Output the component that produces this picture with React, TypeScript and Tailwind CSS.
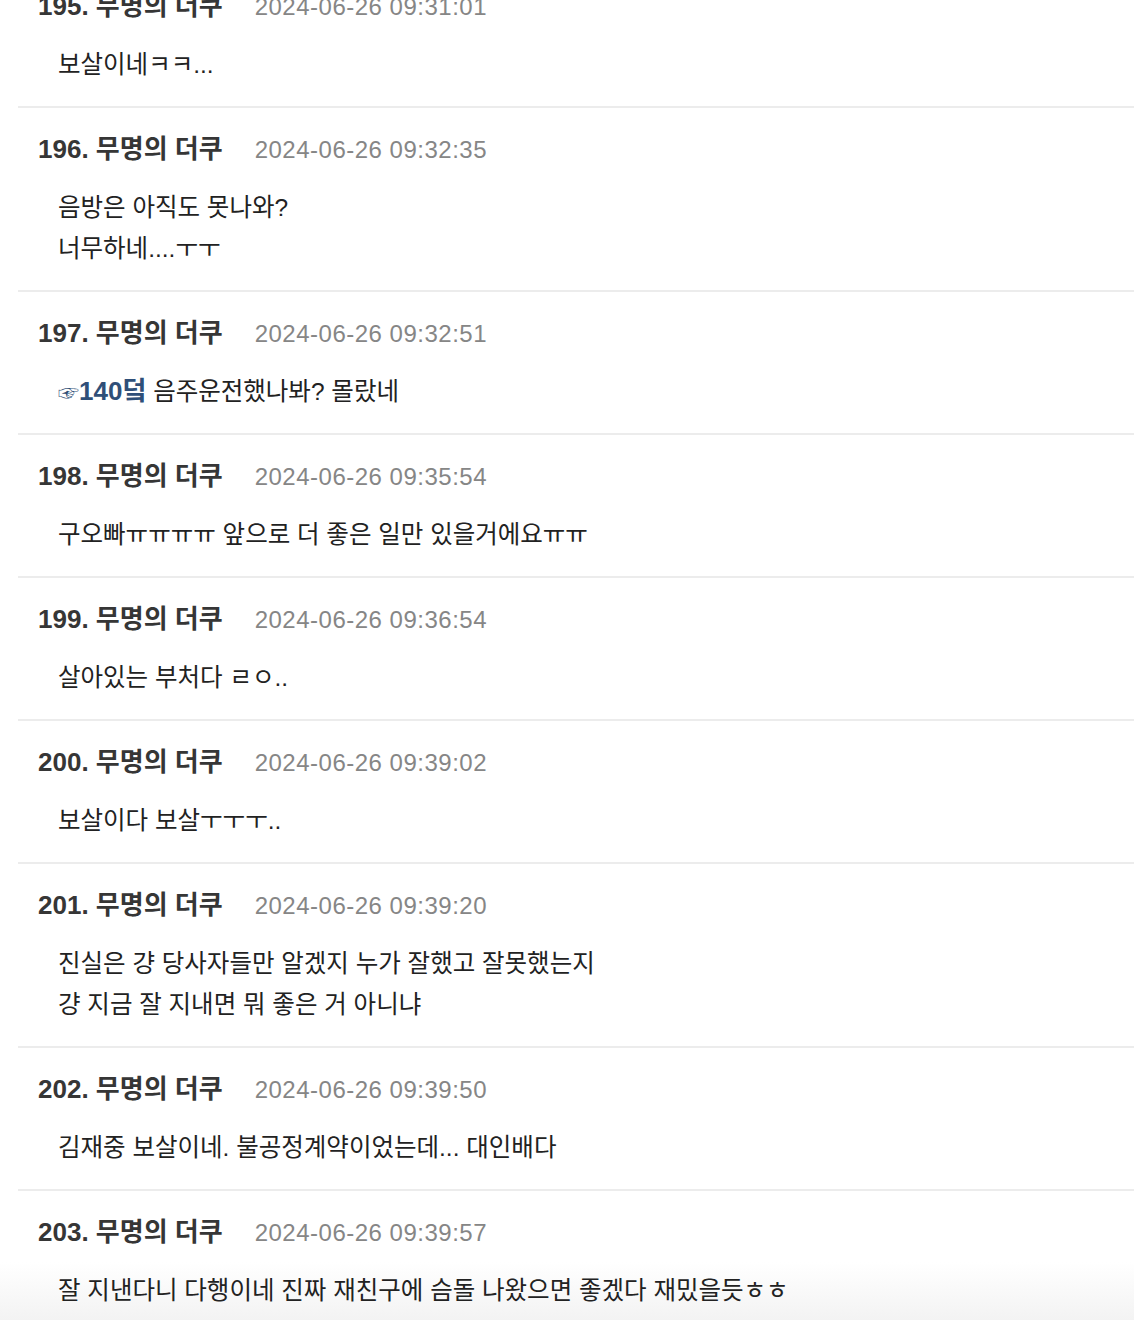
import React from 'react';

type Comment = {
  no: number;
  time: string;
  lines: React.ReactNode[];
};

const comments: Comment[] = [
  { no: 195, time: '2024-06-26 09:31:01', lines: ['보살이네ㅋㅋ...'] },
  { no: 196, time: '2024-06-26 09:32:35', lines: ['음방은 아직도 못나와?', '너무하네....ㅜㅜ'] },
  {
    no: 197,
    time: '2024-06-26 09:32:51',
    lines: [
      <>
        <span className="leading-none text-[#2f4f78]">
          <span className="text-[21px] leading-none">☞</span>
          <span className="text-[26px] font-bold leading-none">140덬</span>
        </span>{' '}
        음주운전했나봐? 몰랐네
      </>,
    ],
  },
  { no: 198, time: '2024-06-26 09:35:54', lines: ['구오빠ㅠㅠㅠㅠ 앞으로 더 좋은 일만 있을거에요ㅠㅠ'] },
  { no: 199, time: '2024-06-26 09:36:54', lines: ['살아있는 부처다 ㄹㅇ..'] },
  { no: 200, time: '2024-06-26 09:39:02', lines: ['보살이다 보살ㅜㅜㅜ..'] },
  {
    no: 201,
    time: '2024-06-26 09:39:20',
    lines: ['진실은 걍 당사자들만 알겠지 누가 잘했고 잘못했는지', '걍 지금 잘 지내면 뭐 좋은 거 아니냐'],
  },
  { no: 202, time: '2024-06-26 09:39:50', lines: ['김재중 보살이네. 불공정계약이었는데... 대인배다'] },
  { no: 203, time: '2024-06-26 09:39:57', lines: ['잘 지낸다니 다행이네 진짜 재친구에 슴돌 나왔으면 좋겠다 재밌을듯ㅎㅎ'] },
];

function CommentItem({ comment }: { comment: Comment }) {
  return (
    <div className="border-b-2 border-[#ececec] pl-5 pt-[22px] pb-[21px]">
      <div className="flex items-baseline h-[38px]">
        <span className="text-[26px] font-bold text-[#363636]">{comment.no}. 무명의 더쿠</span>
        <span className="ml-8 text-[24px] tracking-[0.5px] text-[#868686]">{comment.time}</span>
      </div>
      <div className="mt-[19px] pl-5 text-[24.5px] text-[#222]">
        {comment.lines.map((line, i) => (
          <p key={i} className="h-[41px] leading-[41px]">
            {line}
          </p>
        ))}
      </div>
    </div>
  );
}

export default function App() {
  return (
    <div
      className="relative h-[1320px] overflow-hidden bg-white"
      style={{ fontFamily: '"Liberation Sans", "Noto Sans CJK KR", sans-serif' }}
    >
      <div className="absolute inset-x-0 bottom-0 h-[58px] bg-linear-to-b from-white to-[#f3f3f3]" />
      <div className="relative -mt-[35px] pl-[18px]">
        {comments.map((c) => (
          <CommentItem key={c.no} comment={c} />
        ))}
      </div>
    </div>
  );
}
